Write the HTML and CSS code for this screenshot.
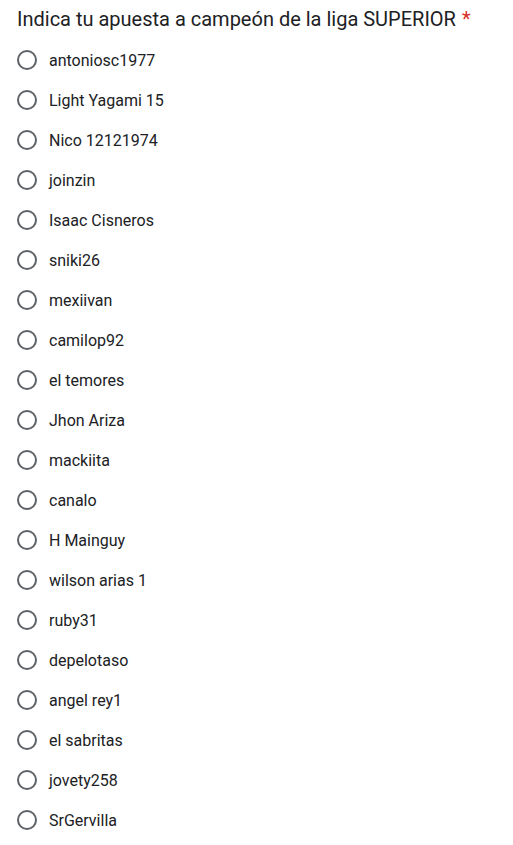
FILE: index.html
```html
<!DOCTYPE html>
<html lang="es">
<head>
<meta charset="utf-8">
<link rel="stylesheet" href="styles.css">
</head>
<body>
<div class="question">
  <div class="title">Indica tu apuesta a campeón de la liga SUPERIOR<span class="req">*</span></div>
  <div class="options">
    <label class="opt"><span class="radio"></span><span class="lbl">antoniosc1977</span></label>
    <label class="opt"><span class="radio"></span><span class="lbl">Light Yagami 15</span></label>
    <label class="opt"><span class="radio"></span><span class="lbl">Nico 12121974</span></label>
    <label class="opt"><span class="radio"></span><span class="lbl">joinzin</span></label>
    <label class="opt"><span class="radio"></span><span class="lbl">Isaac Cisneros</span></label>
    <label class="opt"><span class="radio"></span><span class="lbl">sniki26</span></label>
    <label class="opt"><span class="radio"></span><span class="lbl">mexiivan</span></label>
    <label class="opt"><span class="radio"></span><span class="lbl">camilop92</span></label>
    <label class="opt"><span class="radio"></span><span class="lbl">el temores</span></label>
    <label class="opt"><span class="radio"></span><span class="lbl">Jhon Ariza</span></label>
    <label class="opt"><span class="radio"></span><span class="lbl">mackiita</span></label>
    <label class="opt"><span class="radio"></span><span class="lbl">canalo</span></label>
    <label class="opt"><span class="radio"></span><span class="lbl">H Mainguy</span></label>
    <label class="opt"><span class="radio"></span><span class="lbl">wilson arias 1</span></label>
    <label class="opt"><span class="radio"></span><span class="lbl">ruby31</span></label>
    <label class="opt"><span class="radio"></span><span class="lbl">depelotaso</span></label>
    <label class="opt"><span class="radio"></span><span class="lbl">angel rey1</span></label>
    <label class="opt"><span class="radio"></span><span class="lbl">el sabritas</span></label>
    <label class="opt"><span class="radio"></span><span class="lbl">jovety258</span></label>
    <label class="opt"><span class="radio"></span><span class="lbl">SrGervilla</span></label>
  </div>
</div>
</body>
</html>
```
FILE: styles.css
```css
html, body {
  margin: 0;
  padding: 0;
  background: #ffffff;
}
body {
  font-family: Roboto, Arial, sans-serif;
  color: #202124;
}
.question {
  padding: 5px 17px 0 17px;
}
.title {
  font-size: 20px;
  line-height: 28px;
  color: #202124;
}
.req {
  color: #d93025;
  padding-left: 6px;
}
.options {
  display: flex;
  flex-direction: column;
  margin-top: 7px;
}
.opt {
  display: flex;
  align-items: center;
  height: 40px;
}
.radio {
  box-sizing: border-box;
  width: 20px;
  height: 20px;
  border: 2px solid #5f6368;
  border-radius: 50%;
  flex: none;
}
.lbl {
  margin-left: 12px;
  font-size: 16px;
  color: #202124;
}
```
